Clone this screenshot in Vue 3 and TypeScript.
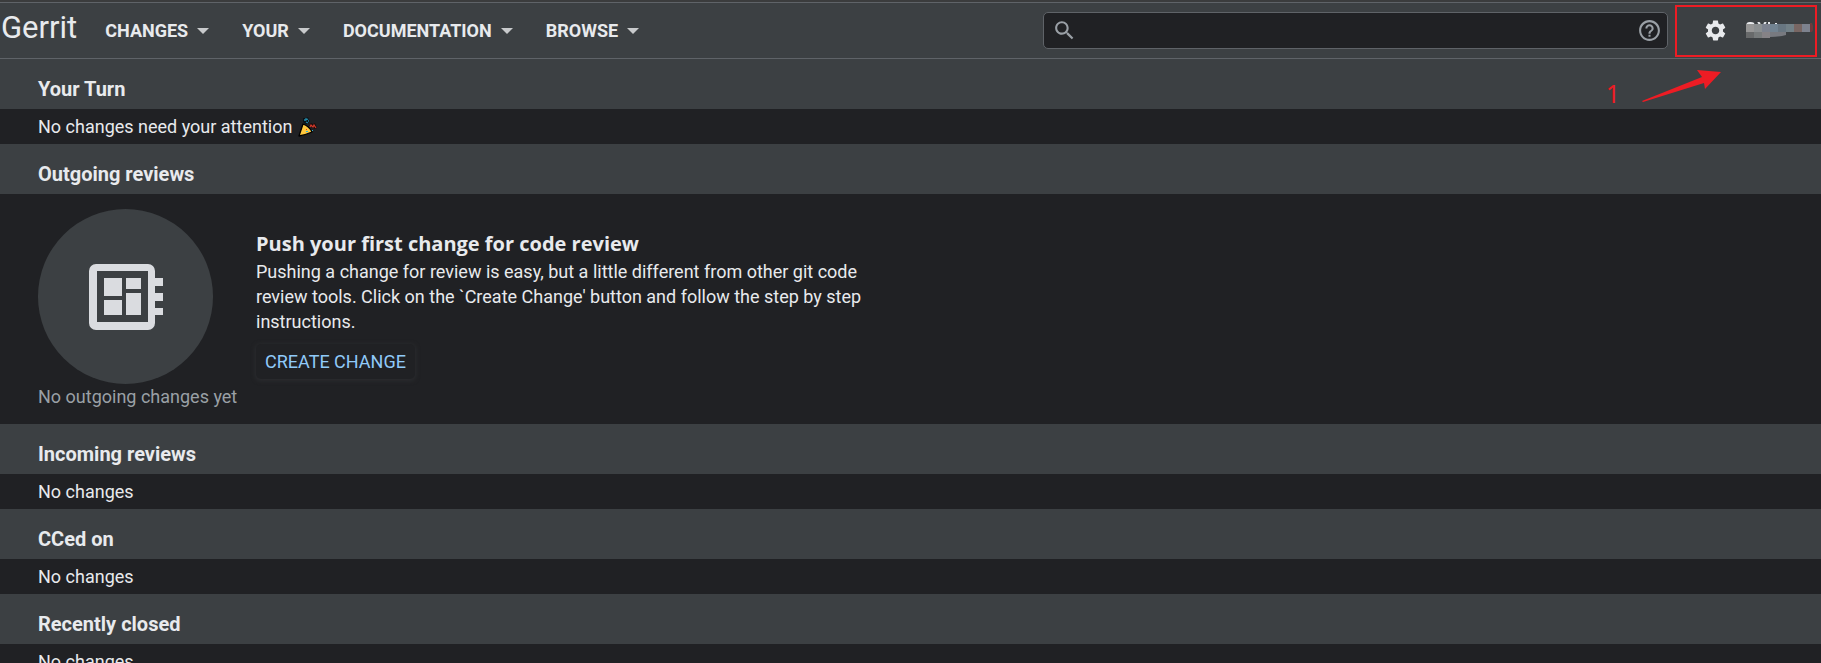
<script setup lang="ts">
import { ref } from 'vue'

interface Section {
  title: string
  kind: 'attention' | 'outgoing' | 'empty'
}

const menus: string[] = ['Changes', 'Your', 'Documentation', 'Browse']
const sections: Section[] = [
  { title: 'Your Turn', kind: 'attention' },
  { title: 'Outgoing reviews', kind: 'outgoing' },
  { title: 'Incoming reviews', kind: 'empty' },
  { title: 'CCed on', kind: 'empty' },
  { title: 'Recently closed', kind: 'empty' },
]
const query = ref('')
</script>

<template>
  <div class="page">
    <header class="bar">
      <a class="brand" href="#">Gerrit</a>
      <nav class="menus">
        <button v-for="m in menus" :key="m" class="menu" type="button">
          {{ m }}
          <svg class="caret" viewBox="0 0 12 6" aria-hidden="true"><path d="M0 0h12L6 6z" /></svg>
        </button>
      </nav>
      <form class="search" role="search" @submit.prevent>
        <svg class="glyph" viewBox="0 0 24 24" aria-hidden="true">
          <path d="M15.5 14h-.79l-.28-.27C15.41 12.59 16 11.11 16 9.5 16 5.91 13.09 3 9.5 3S3 5.91 3 9.5 5.91 16 9.5 16c1.61 0 3.09-.59 4.23-1.57l.27.28v.79l5 4.99L20.49 19l-4.99-5zm-6 0C7.01 14 5 11.99 5 9.5S7.01 5 9.5 5 14 7.01 14 9.5 11.99 14 9.5 14z" />
        </svg>
        <input v-model="query" type="text" aria-label="Search changes" />
        <a class="help" href="#" aria-label="Search help">
          <svg class="glyph" viewBox="0 0 24 24" aria-hidden="true">
            <path d="M11 18h2v-2h-2v2zm1-16C6.48 2 2 6.48 2 12s4.48 10 10 10 10-4.48 10-10S17.52 2 12 2zm0 18c-4.41 0-8-3.59-8-8s3.59-8 8-8 8 3.59 8 8-3.59 8-8 8zm0-14c-2.21 0-4 1.79-4 4h2c0-1.1.9-2 2-2s2 .9 2 2c0 2-3 1.75-3 5h2c0-2.25 3-2.5 3-5 0-2.21-1.79-4-4-4z" />
          </svg>
        </a>
      </form>
      <div class="account">
        <a class="settings" href="#" aria-label="Settings">
          <svg class="glyph" viewBox="0 0 24 24" aria-hidden="true">
            <path d="M19.14 12.94c.04-.3.06-.61.06-.94 0-.32-.02-.64-.07-.94l2.03-1.58c.18-.14.23-.41.12-.61l-1.92-3.32c-.12-.22-.37-.29-.59-.22l-2.39.96c-.5-.38-1.03-.7-1.62-.94l-.36-2.54c-.04-.24-.24-.41-.48-.41h-3.84c-.24 0-.43.17-.47.41l-.36 2.54c-.59.24-1.13.57-1.62.94l-2.39-.96c-.22-.08-.47 0-.59.22L2.74 8.87c-.12.21-.08.47.12.61l2.03 1.58c-.05.3-.09.63-.09.94s.02.64.07.94l-2.03 1.58c-.18.14-.23.41-.12.61l1.92 3.32c.12.22.37.29.59.22l2.39-.96c.5.38 1.03.7 1.62.94l.36 2.54c.05.24.24.41.48.41h3.84c.24 0 .44-.17.47-.41l.36-2.54c.59-.24 1.13-.56 1.62-.94l2.39.96c.22.08.47 0 .59-.22l1.92-3.32c.12-.22.07-.47-.12-.61l-2.01-1.58zM12 15.6c-1.98 0-3.6-1.62-3.6-3.6s1.62-3.6 3.6-3.6 3.6 1.62 3.6 3.6-1.62 3.6-3.6 3.6z" />
          </svg>
        </a>
        <svg class="mosaic" viewBox="0 0 68 18" aria-hidden="true">
          <path d="M1 2Q4 0 8 2M12 0l2 2M20 0l-2 2M23 0v2M30 1v1" fill="none" stroke="#e8eaed" stroke-width="2" />
          <path fill="#969696" d="M0 2h8v8H0z" />
          <path fill="#8b8f91" d="M8 2h8v8H8z" />
          <path fill="#7c828f" d="M16 2h8v8h-8z" />
          <path fill="#728391" d="M24 2h8v8h-8z" />
          <path fill="#687681" d="M32 2h8v8h-8z" />
          <path fill="#728087" d="M40 2h8v8h-8z" />
          <path fill="#786663" d="M48 2h8v8h-8z" />
          <path fill="#7d828e" d="M56 2h8v8h-8z" />
          <path fill="#6b3a3d" d="M64 1h2l1 3v4l-1 2h-2z" />
          <path fill="#686a6b" d="M0 10h8v6H0z" />
          <path fill="#777b7c" d="M8 10h8v6H8z" />
          <path fill="#858286" d="M16 10h8v6h-8z" />
          <path fill="#787a80" d="M24 10h16v3q-8 2-16 2z" />
        </svg>
      </div>
      <div class="note">
        <svg class="arrow" viewBox="0 0 80 34" aria-hidden="true">
          <path d="M0 32L60 8 55 1 79 3 63 20 62 14 1 33z" />
        </svg>
        <span class="step">1</span>
      </div>
    </header>

    <main>
      <section v-for="s in sections" :key="s.title">
        <h2>{{ s.title }}</h2>
        <p v-if="s.kind === 'attention'" class="row">
          No changes need your attention
          <svg class="party" viewBox="0 0 20 20" role="img" aria-label="party">
            <path d="M5 1h3l2-1 1 3 1 1-2 3H7L5 5z" fill="#0b1216" />
            <path d="M11 9l2-3 2 1 2-1 2 5-2 1z" fill="#1a0c0c" />
            <path d="M5 7Q3 13 1 19 7 18 14 15 11 9 5 7z" fill="#ffc83d" stroke="#000" stroke-width="1.3" stroke-linejoin="round" />
            <path d="M6 3h2M8 1v2l2-1M8 5l2 1M10 4h1" fill="none" stroke="#2389a8" stroke-width="1.3" />
            <path d="M12 10l1-2 2 2 1-2 2 3" fill="none" stroke="#d13a2b" stroke-width="1.2" />
            <path d="M8 12h1v1H8z" fill="#f03a17" />
            <path d="M8 14h2v1H8zM14 13h1v1h-1z" fill="#2cb3d8" />
          </svg>
        </p>
        <div v-else-if="s.kind === 'outgoing'" class="outgoing">
          <figure class="empty">
            <span class="disc">
              <svg viewBox="0 0 74 66" aria-hidden="true">
                <path fill-rule="evenodd" d="M7 0h52a7 7 0 0 1 7 7v7h8v8h-8v7h8v8h-8v7h8v7h-8v8a7 7 0 0 1-7 7H7a7 7 0 0 1-7-7V7a7 7 0 0 1 7-7zM8 7v51h51V7z" />
                <path d="M15 14h18v18H15zM37 14h15v11H37zM15 36h18v15H15zM37 29h15v22H37z" />
              </svg>
            </span>
            <figcaption>No outgoing changes yet</figcaption>
          </figure>
          <div class="help-text">
            <h3>Push your first change for code review</h3>
            <p>
              Pushing a change for review is easy, but a little different from other git code
              review tools. Click on the `Create Change' button and follow the step by step
              instructions.
            </p>
            <button class="create" type="button">Create Change</button>
          </div>
        </div>
        <p v-else class="row">No changes</p>
      </section>
    </main>
  </div>
</template>

<style>
body {
  margin: 0;
  background: #202124;
}
html {
  scrollbar-width: none;
}
</style>

<style scoped>
.page {
  font: 18px/25px Roboto, sans-serif;
  color: #e8eaed;
  background: #202124;
  border-top: 2px solid #3b3c3d;
}
.bar {
  position: relative;
  display: flex;
  align-items: center;
  height: 55px;
  background: #3c4043;
  border-top: 1px solid #5f6368;
  border-bottom: 1px solid #5f6368;
}
.brand {
  color: inherit;
  text-decoration: none;
  font-size: 31px;
  line-height: 36px;
  padding: 0 0 6px 1px;
}
.menus {
  display: flex;
  gap: 33px;
  margin-left: 28px;
}
.menu {
  display: flex;
  align-items: center;
  gap: 9px;
  padding: 0;
  border: 0;
  background: none;
  color: inherit;
  font: 700 18px/25px Roboto, sans-serif;
  text-transform: uppercase;
}
.caret {
  width: 12px;
  height: 6px;
  fill: #c8cacc;
}
.search {
  display: flex;
  align-items: center;
  width: 625px;
  height: 37px;
  padding: 0 5px 0 8px;
  box-sizing: border-box;
  margin-left: auto;
  background: #202124;
  border: 1px solid #5f6368;
  border-radius: 5px;
}
.search input {
  flex: 1;
  min-width: 0;
  border: 0;
  outline: 0;
  background: none;
  color: inherit;
  font: inherit;
}
.glyph {
  display: block;
  width: 25px;
  height: 25px;
  fill: #9aa0a6;
}
.account {
  display: flex;
  align-items: center;
  gap: 18px;
  box-sizing: border-box;
  width: 142px;
  height: 52px;
  margin: 0 4px 0 7px;
  padding-left: 26px;
  border: 2px solid #ed1c24;
}
.settings .glyph {
  fill: #e8eaed;
}
.mosaic {
  width: 68px;
  height: 18px;
}
.note {
  position: absolute;
  top: 66px;
  right: 99px;
  display: flex;
  flex-direction: row-reverse;
  gap: 22px;
  color: #ed1c24;
}
.arrow {
  width: 80px;
  height: 34px;
  fill: #ed1c24;
}
.step {
  font: 25px/48px "Noto Sans", sans-serif;
}
h2 {
  margin: 0;
  padding: 18px 38px 7px;
  font-size: 20px;
  line-height: 25px;
  font-weight: 700;
  background: #3c4043;
}
.row {
  display: flex;
  align-items: center;
  gap: 6px;
  margin: 0;
  padding: 5px 38px;
}
.party {
  width: 20px;
  height: 20px;
}
.outgoing {
  display: flex;
  gap: 18px;
  padding: 15px 38px;
}
.empty {
  flex: none;
  width: 200px;
  margin: 0;
}
.disc {
  display: flex;
  align-items: center;
  justify-content: center;
  width: 175px;
  height: 175px;
  border-radius: 50%;
  background: #3c4043;
}
.disc svg {
  width: 74px;
  height: 66px;
  fill: #dadce0;
}
figcaption {
  color: #9aa0a6;
  white-space: nowrap;
}
.help-text {
  max-width: 620px;
  padding-top: 22px;
}
h3 {
  margin: 0 0 3px;
  font: 700 20px/25px "Open Sans", sans-serif;
}
.help-text p {
  margin: 0;
}
.create {
  display: block;
  margin-top: 10px;
  padding: 5px 9px;
  border: 0;
  border-radius: 5px;
  background: #202124;
  color: #90caf9;
  font: 18px/25px Roboto, sans-serif;
  text-transform: uppercase;
  box-shadow: 0 1px 4px 1px #2b2c2f;
}
</style>
